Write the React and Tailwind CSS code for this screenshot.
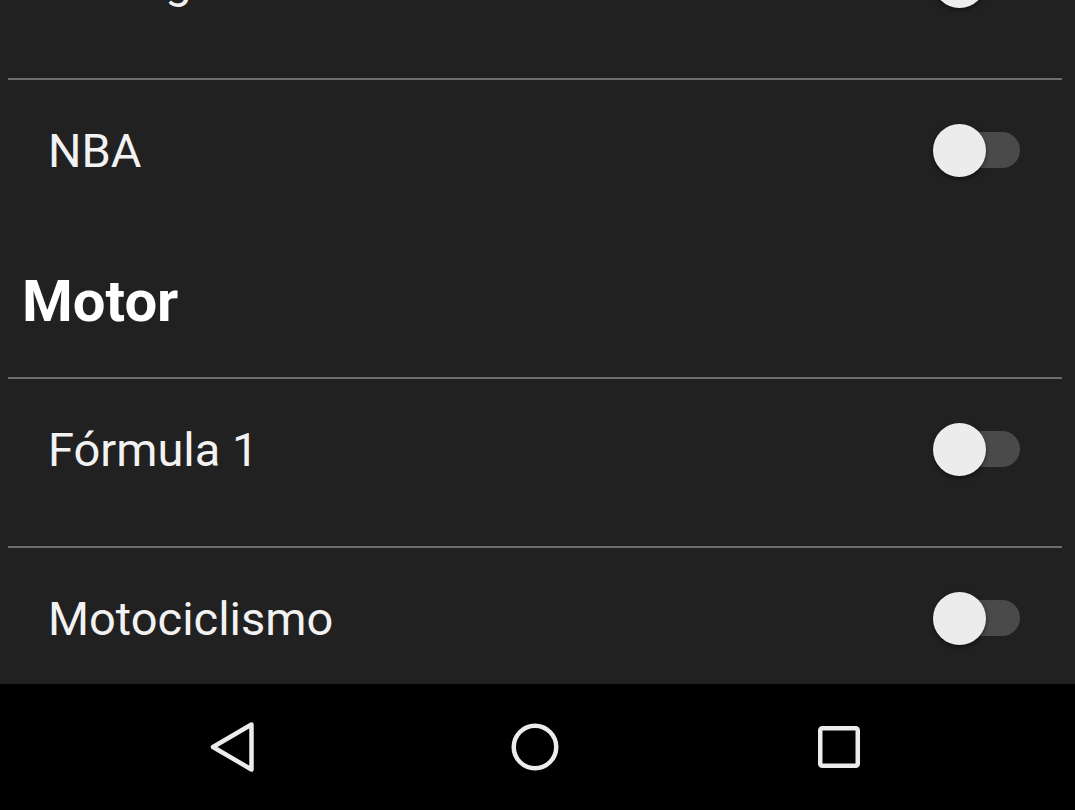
import React from "react";

function Toggle() {
  return (
    <div className="relative w-[87px] h-[56px] flex items-center">
      <div className="absolute right-0 top-[10px] w-[62px] h-[36px] rounded-full bg-[#4a4a4a]" />
      <div className="absolute left-0 top-[2px] w-[53px] h-[53px] rounded-full bg-[#ececec] shadow-[0_2px_4px_rgba(0,0,0,0.5)]" />
    </div>
  );
}

function Divider() {
  return <div className="ml-[8px] mr-[13px] h-[2px] bg-[#6e6e6e]" />;
}

function Row({ label }) {
  return (
    <div className="h-[167px]">
      <div className="h-[140px] flex items-center justify-between pl-[48px] pr-[55px]">
        <span className="text-[47px] leading-none text-[#f2f2f2]">{label}</span>
        <Toggle />
      </div>
    </div>
  );
}

export default function App() {
  return (
    <div
      className="w-[1075px] h-[810px] overflow-hidden flex flex-col bg-[#212121]"
      style={{ fontFamily: "Roboto, 'Liberation Sans', sans-serif" }}
    >
      <div className="h-[684px] overflow-hidden">
        <div className="mt-[-89px]">
          <Row label="Euroliga" />
          <Divider />
          <Row label="NBA" />
          <div className="h-[130px] flex pl-[22px] pt-[25px]">
            <span className="text-[58px] font-bold leading-none text-white">Motor</span>
          </div>
          <Divider />
          <Row label="Fórmula 1" />
          <Divider />
          <Row label="Motociclismo" />
        </div>
      </div>
      <div className="h-[126px] bg-black flex items-center pl-[201px] gap-[244px]">
        <svg width="60" height="52" viewBox="0 0 60 52" fill="none" stroke="#ececec" strokeWidth="4.5" strokeLinejoin="round">
          <path d="M50.5 3.5 L12 26 L50.5 48.5 Z" />
        </svg>
        <svg width="60" height="50" viewBox="0 0 60 50" fill="none" stroke="#ececec" strokeWidth="4.5">
          <circle cx="30" cy="25" r="21.25" />
        </svg>
        <svg width="60" height="44" viewBox="0 0 60 44" fill="none" stroke="#ececec" strokeWidth="4.5">
          <rect x="11.25" y="3.25" width="37.5" height="37.5" rx="2" />
        </svg>
      </div>
    </div>
  );
}
